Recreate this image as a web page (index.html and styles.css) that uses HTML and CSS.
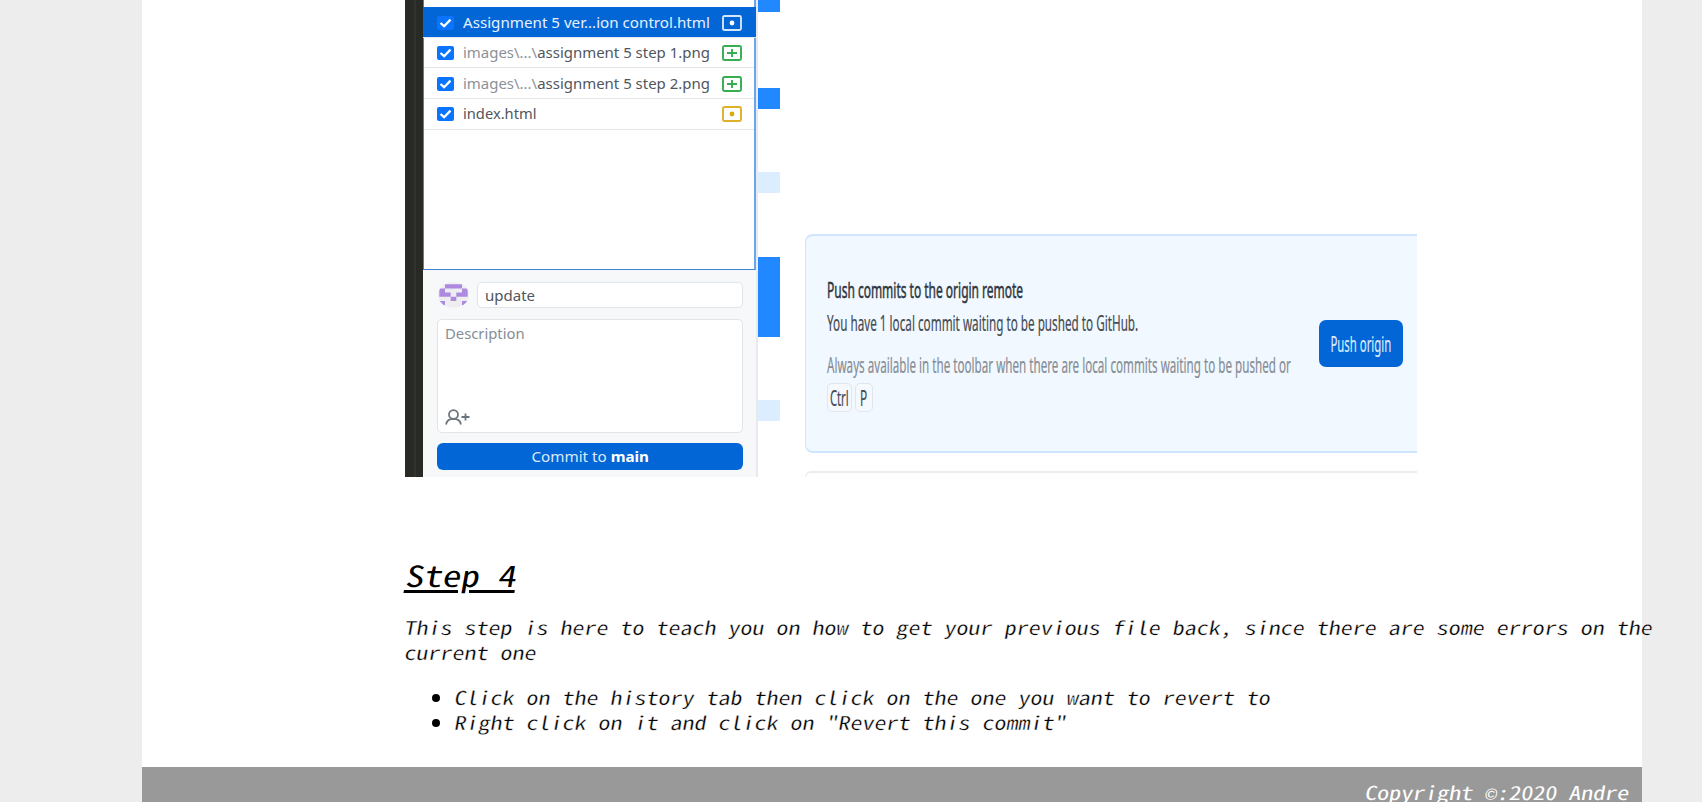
FILE: index.html
```html
<!DOCTYPE html>
<html lang="en">
<head>
<meta charset="utf-8">
<title>Version control</title>
<link rel="stylesheet" href="styles.css">
</head>
<body>
<div class="page">
  <main class="content">
    <div class="shots">
      <div class="shot-commit">
        <div class="editor-edge"></div>
        <div class="panel">
          <div class="files">
            <div class="row selected">
              <svg class="check" viewBox="0 0 17 14"><path d="M3.5 7l3.6 3.2L13.5 3.6"/></svg>
              <span class="label"><span class="fit" data-w="247">Assignment 5 ver...ion control.html</span></span>
              <svg class="status" viewBox="0 0 20 16"><rect x="1" y="1" width="18" height="14" rx="1.5"/><circle cx="10" cy="8" r="2.4"/></svg>
            </div>
            <div class="row">
              <svg class="check" viewBox="0 0 17 14"><path d="M3.5 7l3.6 3.2L13.5 3.6"/></svg>
              <span class="label"><span class="fit" data-w="247"><span class="dim">images\...\</span>assignment 5 step 1.png</span></span>
              <svg class="status added" viewBox="0 0 20 16"><rect x="1" y="1" width="18" height="14" rx="1.5"/><path d="M5 8h10M10 4v8"/></svg>
            </div>
            <div class="row">
              <svg class="check" viewBox="0 0 17 14"><path d="M3.5 7l3.6 3.2L13.5 3.6"/></svg>
              <span class="label"><span class="fit" data-w="247"><span class="dim">images\...\</span>assignment 5 step 2.png</span></span>
              <svg class="status added" viewBox="0 0 20 16"><rect x="1" y="1" width="18" height="14" rx="1.5"/><path d="M5 8h10M10 4v8"/></svg>
            </div>
            <div class="row">
              <svg class="check" viewBox="0 0 17 14"><path d="M3.5 7l3.6 3.2L13.5 3.6"/></svg>
              <span class="label"><span class="fit" data-w="74">index.html</span></span>
              <svg class="status modified" viewBox="0 0 20 16"><rect x="1" y="1" width="18" height="14" rx="1.5"/><circle cx="10" cy="8" r="2.4"/></svg>
            </div>
          </div>
          <div class="commit">
            <div class="summary">
              <svg class="avatar" viewBox="0 0 31 26"><defs><clipPath id="round"><ellipse cx="15.500" cy="13" rx="15.500" ry="12.800"/></clipPath></defs><g clip-path="url(#round)"><rect width="31" height="26" fill="#eeeef0"/><path fill="#ad8ae0" d="M7 2.200h17v4.200H7zM1.300 6.400H7v4.200H1.300zM24 6.400h5.700v4.200H24zM1.300 10.600h11.400v4.200H1.300zM18.300 10.600h11.400v4.200H18.300zM12.700 14.800h5.600v4.200h-5.600zM1.300 19H7v4.200H1.300zM24 19h5.700v4.200H24z"/></g></svg>
              <div class="input"><span class="fit" data-w="50">update</span></div>
            </div>
            <div class="description">
              <span class="fit" data-w="80">Description</span>
              <svg class="coauthor" viewBox="0 0 25 16"><ellipse cx="8.500" cy="5.500" rx="4.500" ry="4.400"/><path d="M1 15.500c.6-3.500 3.400-5.600 7.500-5.600s6.900 2.100 7.500 5.600M16.500 8h8M20.500 4.500v7"/></svg>
            </div>
            <div class="commit-btn"><span class="fit mid" data-w="117">Commit to <b>main</b></span></div>
          </div>
        </div>
        <div class="bars">
          <i class="bar b1"></i><i class="bar b2"></i><i class="bar light b3"></i><i class="bar b4"></i><i class="bar light b5"></i>
        </div>
      </div>
      <div class="shot-push">
        <div class="card">
          <div class="texts">
            <div class="line title"><span class="fit" data-w="196">Push commits to the origin remote</span></div>
            <div class="line second"><span class="fit" data-w="311">You have 1 local commit waiting to be pushed to GitHub.</span></div>
            <div class="line hint"><span class="fit" data-w="464">Always available in the toolbar when there are local commits waiting to be pushed or</span></div>
            <div class="keys"><span class="key ctrl"><span class="fit mid" data-w="19">Ctrl</span></span><span class="key p"><span class="fit mid" data-w="7">P</span></span></div>
          </div>
          <div class="push-btn"><span class="fit mid" data-w="61">Push origin</span></div>
        </div>
        <div class="next-card"></div>
      </div>
    </div>
    <h2 class="step"><span class="slant">Step 4</span></h2>
    <p class="intro"><span class="slant">This step is here to teach you on how to get your previous file back, since there are some errors on the</span><br><span class="slant">current one</span></p>
    <ul class="todo">
      <li><span class="slant">Click on the history tab then click on the one you want to revert to</span></li>
      <li><span class="slant">Right click on it and click on "Revert this commit"</span></li>
    </ul>
  </main>
  <footer class="footer"><span class="slant">Copyright <span class="sign">©</span>:2020 Andre</span></footer>
</div>
<script src="fit.js"></script>
</body>
</html>
```
FILE: styles.css
```css
* { box-sizing: border-box; }
html { background: #ededed; }
body { margin: 0; height: 802px; overflow: hidden; font-family: "Noto Sans Mono CJK SC", "Liberation Mono", monospace; font-size: 20px; color: #000; }
.page { width: 1500px; margin-left: 142px; height: 802px; display: flex; flex-direction: column; background: #fff; }
.content { height: 767px; flex: none; padding-left: 263px; }

/* application pictures */
.shots { height: 477px; display: flex; gap: 25px; font-family: "Noto Sans", "Open Sans", sans-serif; }
.fit { display: inline-block; white-space: nowrap; transform-origin: 0 50%; }
.fit.mid { transform-origin: 50% 50%; }
.shot-commit { width: 375px; display: flex; font-size: 13.5px; color: #50565d; }
.editor-edge { width: 18px; background: linear-gradient(90deg, #282a25 9px, #32332d 9px, #32332d 11px, #282a25 11px); }
.panel { width: 335px; background: #f6f8fa; border-right: 2px solid #e8eaed; display: flex; flex-direction: column; }
.files { width: 333px; height: 270px; padding-top: 7px; background: #fff; border: 2px solid #6ba5ea; border-width: 0 2px 1px 1px; border-bottom-color: #3c83d6; border-left-color: #3c83d6; }
.row { height: 30.7px; display: flex; align-items: center; padding-left: 13px; padding-top: 1px; border-bottom: 1px solid #e3e5e8; }
.row.selected { background: #0366d6; color: #e6f1ff; margin: 0 -2px 0 -1px; padding-left: 14px; padding-top: 2px; }
.check { width: 17px; height: 14px; background: #0a74ff; border-radius: 2px; flex: none; }
.check path { fill: none; stroke: #fff; stroke-width: 2.3; }
.label { width: 268px; padding-left: 9px; flex: none; line-height: 30px; }
.dim { color: #8b9198; }
.status { width: 20px; height: 16px; fill: none; stroke: #d5e6fa; stroke-width: 1.9; flex: none; }
.status circle { fill: #fff; stroke: none; }
.status.added { stroke: #36ad50; }
.status.modified { stroke: #e0b02a; }
.status.modified circle { fill: #dbab09; }
.commit { padding: 12px 12px 0 14px; display: flex; flex-direction: column; }
.summary { height: 26px; display: flex; gap: 8px; }
.avatar { width: 31px; height: 26px; margin-left: 1px; flex: none; }
.input { width: 266px; height: 26px; line-height: 26px; padding-left: 7px; background: #fff; border: 1px solid #e1e4e8; border-radius: 5px; }
.description { width: 306px; height: 114px; margin-top: 11px; padding: 4px 6.5px 7px; line-height: 20px; color: #868d95; background: #fff; border: 1px solid #e1e4e8; border-radius: 5px; display: flex; flex-direction: column; align-items: flex-start; justify-content: space-between; }
.coauthor { width: 25px; height: 16px; fill: none; stroke: #6c747d; stroke-width: 1.8; }
.commit-btn { width: 306px; height: 27px; line-height: 29px; margin-top: 10px; border-radius: 6px; background: #0366d6; color: #dceafa; text-align: center; }
.commit-btn b { color: #fff; }
.bars { width: 22px; display: flex; flex-direction: column; }
.bar { background: #2188ff; flex: none; }
.bar.light { background: #dbedff; }
.b1 { height: 12px; }
.b2 { height: 21px; margin-top: 76px; }
.b3 { height: 21px; margin-top: 63px; }
.b4 { height: 80px; margin-top: 64px; }
.b5 { height: 21px; margin-top: 63px; }

.shot-push { width: 612px; padding-top: 234px; font-size: 22px; color: #454b52; overflow: hidden; -webkit-text-stroke: .2px; }
.card { height: 219px; display: flex; background: #f1f8ff; border: 2px solid #cfe5ff; border-width: 2px 0 2px 1.5px; border-radius: 8px 0 0 8px; }
.texts { width: 513px; flex: none; padding: 38px 0 0 21px; }
.line { height: 33px; line-height: 31px; }
.title { color: #2f363d; -webkit-text-stroke: .55px #2f363d; }
.second { height: 42px; }
.hint { color: #868d95; }
.keys { display: flex; gap: 3px; padding: 1px 0 0 0; }
.key { height: 29px; line-height: 26px; border: 1px solid #e1e6ec; border-radius: 5px; background: #f5f9fe; display: flex; justify-content: center; }
.ctrl { width: 25px; }
.p { width: 18px; }
.push-btn { width: 84px; height: 47px; margin-top: 84px; line-height: 47px; border-radius: 7px; background: #0366d6; color: #dceafa; display: flex; justify-content: center; flex: none; }
.next-card { height: 20px; margin-top: 18px; border-top: 2px solid #ececec; border-left: 1.5px solid #ececec; border-radius: 6px 0 0 0; }

/* article text */
.slant { display: inline-block; vertical-align: top; white-space: nowrap; font-size: .95em; transform: skewX(-10deg) scaleX(1.2632); transform-origin: 0 75%; }
.step { margin: 78px 0 0; height: 39px; line-height: 39px; font-size: 30.8px; font-weight: 400; }
.step .slant { text-decoration: underline 3px; text-underline-offset: 3px; }
.intro { margin: 20px 0 0 -1px; line-height: 25px; -webkit-text-stroke: .3px #fff; }
.todo { margin: 20px 0 0 -1px; padding-left: 50px; line-height: 25px; -webkit-text-stroke: .3px #fff; }
.footer { height: 35px; background: #999; color: #fff; text-align: right; line-height: 25px; padding: 12px 14px 0 0; overflow: hidden; }
.footer .slant { transform-origin: 100% 75%; }
.sign { font-family: "Liberation Mono", monospace; font-size: .8333em; }
```
FILE: fit.js
```js
// Condense or widen each label to its own set width.
document.querySelectorAll('.fit').forEach(function (el) {
  el.style.transform = 'scaleX(' + el.dataset.w / el.offsetWidth + ')';
});
```
